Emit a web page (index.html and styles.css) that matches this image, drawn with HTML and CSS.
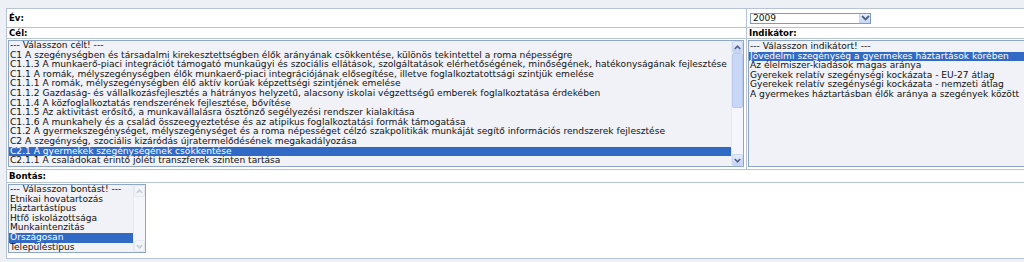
FILE: index.html
```html
<!DOCTYPE html>
<html lang="hu">
    <head>
        <meta charset="UTF-8" />
        <meta name="viewport" content="width=device-width, initial-scale=1.0" />
        <title>Indikátor lekérdezés</title>

        <link rel="stylesheet" href="styles.css">
    </head>
    <body>
        <table class="filter">
            <colgroup>
                <col class="col-main" />
                <col class="col-side" />
            </colgroup>
            <tr class="row-year">
                <td class="label">Év:</td>
                <td class="field">
                    <div class="combo">
                        <span class="combo-value">2009</span>
                        <span class="combo-btn">
                            <svg width="9" height="6" viewBox="0 0 9 6"><path d="M1 1 L4.5 4.5 L8 1" fill="none" stroke="#4d6185" stroke-width="1.8"/></svg>
                        </span>
                    </div>
                </td>
            </tr>
            <tr class="row-label">
                <td class="label">Cél:</td>
                <td class="label">Indikátor:</td>
            </tr>
            <tr class="row-lists">
                <td class="cell-list">
                    <div class="listbox goals">
                        <ul class="options">
                            <li>--- Válasszon célt! ---</li>
                            <li>C1 A szegénységben és társadalmi kirekesztettségben élők arányának csökkentése, különös tekintettel a roma népességre</li>
                            <li>C1.1.3 A munkaerő-piaci integrációt támogató munkaügyi és szociális ellátások, szolgáltatások elérhetőségének, minőségének, hatékonyságának fejlesztése</li>
                            <li>C1.1 A romák, mélyszegénységben élők munkaerő-piaci integrációjának elősegítése, illetve foglalkoztatottsági szintjük emelése</li>
                            <li>C1.1.1 A romák, mélyszegénységben élő aktív korúak képzettségi szintjének emelése</li>
                            <li>C1.1.2 Gazdaság- és vállalkozásfejlesztés a hátrányos helyzetű, alacsony iskolai végzettségű emberek foglalkoztatása érdekében</li>
                            <li>C1.1.4 A közfoglalkoztatás rendszerének fejlesztése, bővítése</li>
                            <li>C1.1.5 Az aktivitást erősítő, a munkavállalásra ösztönző segélyezési rendszer kialakítása</li>
                            <li>C1.1.6 A munkahely és a család összeegyeztetése és az atipikus foglalkoztatási formák támogatása</li>
                            <li>C1.2 A gyermekszegénységet, mélyszegénységet és a roma népességet célzó szakpolitikák munkáját segítő információs rendszerek fejlesztése</li>
                            <li>C2 A szegénység, szociális kizáródás újratermelődésének megakadályozása</li>
                            <li class="selected">C2.1 A gyermekek szegénységének csökkentése</li>
                            <li>C2.1.1 A családokat érintő jóléti transzferek szinten tartása</li>
                        </ul>
                        <div class="scrollbar">
                            <span class="sb-btn">
                                <svg width="7" height="5" viewBox="0 0 7 5"><path d="M0.8 4 L3.5 1.2 L6.2 4" fill="none" stroke="#4d6185" stroke-width="1.6"/></svg>
                            </span>
                            <span class="sb-thumb"></span>
                            <span class="sb-track"></span>
                            <span class="sb-btn">
                                <svg width="7" height="5" viewBox="0 0 7 5"><path d="M0.8 1 L3.5 3.8 L6.2 1" fill="none" stroke="#4d6185" stroke-width="1.6"/></svg>
                            </span>
                        </div>
                    </div>
                </td>
                <td class="cell-list">
                    <div class="listbox indicators">
                        <ul class="options">
                            <li>--- Válasszon indikátort! ---</li>
                            <li class="selected">Jövedelmi szegénység a gyermekes háztartások körében</li>
                            <li>Az élelmiszer-kiadások magas aránya</li>
                            <li>Gyerekek relatív szegénységi kockázata - EU-27 átlag</li>
                            <li>Gyerekek relatív szegénységi kockázata - nemzeti átlag</li>
                            <li>A gyermekes háztartásban élők aránya a szegények között</li>
                        </ul>
                    </div>
                </td>
            </tr>
            <tr class="row-label row-label-b">
                <td class="label" colspan="2">Bontás:</td>
            </tr>
            <tr class="row-breakdown">
                <td class="cell-list" colspan="2">
                    <div class="listbox breakdown">
                        <ul class="options">
                            <li>--- Válasszon bontást! ---</li>
                            <li>Etnikai hovatartozás</li>
                            <li>Háztartástípus</li>
                            <li>Htfő iskolázottsága</li>
                            <li>Munkaintenzitás</li>
                            <li class="selected">Országosan</li>
                            <li>Településtípus</li>
                        </ul>
                        <div class="scrollbar disabled">
                            <span class="sb-btn">
                                <svg width="7" height="5" viewBox="0 0 7 5"><path d="M0.8 4 L3.5 1.2 L6.2 4" fill="none" stroke="#c4ccd8" stroke-width="1.6"/></svg>
                            </span>
                            <span class="sb-track"></span>
                            <span class="sb-btn">
                                <svg width="7" height="5" viewBox="0 0 7 5"><path d="M0.8 1 L3.5 3.8 L6.2 1" fill="none" stroke="#c4ccd8" stroke-width="1.6"/></svg>
                            </span>
                        </div>
                    </div>
                </td>
            </tr>
        </table>
    </body>
</html>
```

FILE: styles.css
```css
* {
    box-sizing: border-box;
}
body {
    margin: 0;
    font-family: "DejaVu Sans", Verdana, sans-serif;
    font-size: 9.1px;
    color: #111;
    background-color: #edf0f5;
    overflow: hidden;
}

.filter {
    margin: 8px 0 0 6px;
    width: 1030px;
    border-collapse: collapse;
    table-layout: fixed;
    background-color: #fff;
}

.col-main {
    width: 740px;
}

.filter td {
    border: 1px solid #b7c3d4;
    padding: 0 2px;
    vertical-align: middle;
}

.label {
    font-weight: bold;
    font-size: 8.6px;
    color: #000;
}

.row-year td {
    height: 19px;
}

.row-label td {
    height: 11px;
    line-height: 9px;
}

.row-label-b td {
    height: 13px;
}

.filter td.cell-list {
    padding: 1px 1px 2px;
    vertical-align: top;
}

.row-breakdown td.cell-list {
    padding-bottom: 5px;
}

/* combo box */
.combo {
    display: flex;
    width: 121px;
    height: 11px;
    margin-left: 1px;
    border: 1px solid #7f9db9;
    background-color: #fff;
}

.combo-value {
    flex: 1;
    padding-left: 2px;
    line-height: 9px;
}

.combo-btn {
    width: 11px;
    display: flex;
    align-items: center;
    justify-content: center;
    background: linear-gradient(#e6edfd, #c6d6f8);
    border-left: 1px solid #c9d6f1;
}

/* list boxes */
.listbox {
    display: flex;
    border: 1px solid #8fa6c2;
    background-color: #f0f2f7;
    overflow: hidden;
}

.options {
    flex: 1;
    margin: 0;
    padding: 0;
    list-style-type: none;
    min-width: 0;
}

.options li {
    line-height: 9.6px;
    height: 9.6px;
    padding-left: 1px;
    white-space: nowrap;
}

.options li.selected {
    background-color: #316ac5;
    color: #fff;
}

.goals {
    width: 736px;
    height: 127px;
}

.indicators {
    width: 278px;
    height: 127px;
    padding-top: 1px;
}

.breakdown {
    width: 138px;
    height: 69px;
}

/* scroll bars */
.scrollbar {
    width: 12px;
    display: flex;
    flex-direction: column;
    background-color: #f4f6fb;
    border-left: 1px solid #e3e8f2;
}

.sb-btn {
    height: 12px;
    display: flex;
    align-items: center;
    justify-content: center;
    background: linear-gradient(#e6edfd, #c3d3f6);
    border: 1px solid #c9d6f1;
    border-radius: 2px;
}

.sb-thumb {
    height: 55px;
    background-color: #c9d7f6;
    border: 1px solid #b9c9ee;
    border-radius: 2px;
}

.sb-track {
    flex: 1;
}

.scrollbar.disabled .sb-btn {
    background: #f2f4f7;
    border-color: #e6e9ef;
}
```
